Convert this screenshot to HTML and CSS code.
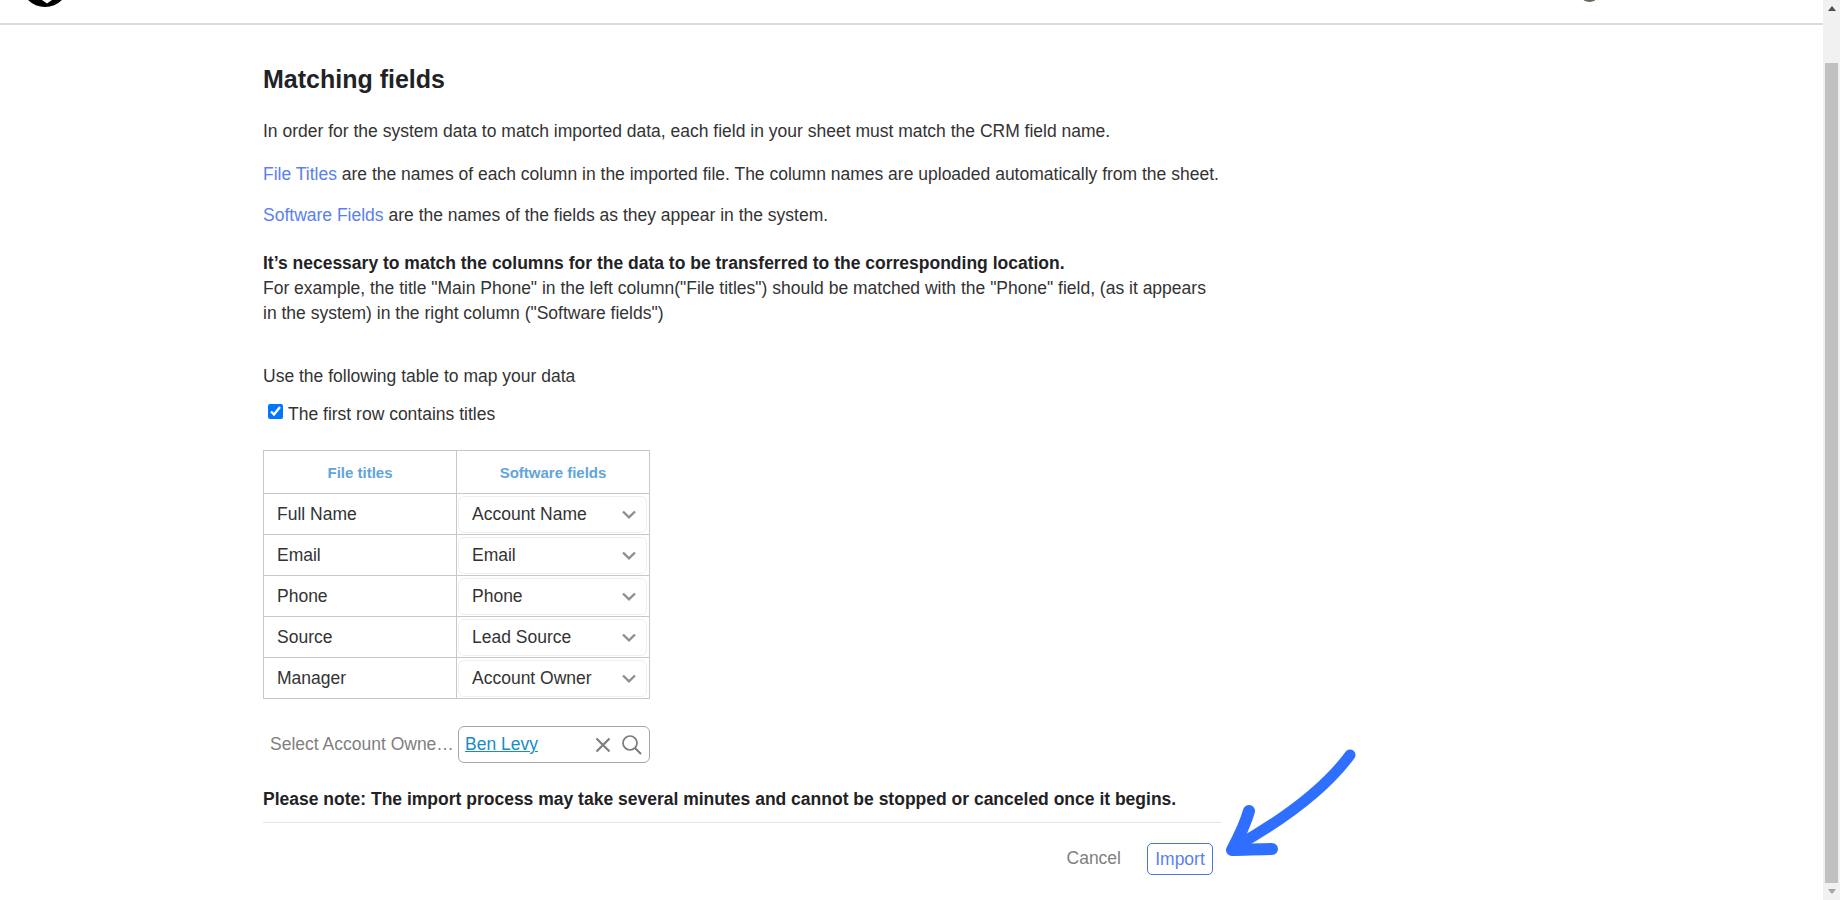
FILE: index.html
```html
<!DOCTYPE html>
<html lang="en">
<head>
<meta charset="utf-8">
<title>Matching fields</title>
<link rel="stylesheet" href="styles.css">
</head>
<body>
<div class="app">
  <div class="main">
    <header class="topbar">
      <svg class="logo" width="36" height="8" viewBox="0 0 36 8" aria-hidden="true"><circle cx="18" cy="-17" r="24" fill="#000"/><path d="M15 0h10l-5 3.500z" fill="#fff"/></svg>
      <svg class="avatar" width="15" height="2" viewBox="0 0 15 2" aria-hidden="true"><ellipse cx="7.500" cy="-3" rx="7.500" ry="5" fill="#6f6355"/></svg>
    </header>
    <main class="content">
      <h1 class="title">Matching fields</h1>
      <p class="para">In order for the system data to match imported data, each field in your sheet must match the CRM field name.</p>
      <p class="para para-titles"><span class="term">File Titles</span> are the names of each column in the imported file. The column names are uploaded automatically from the sheet.</p>
      <p class="para para-software"><span class="term">Software Fields</span> are the names of the fields as they appear in the system.</p>
      <p class="para para-example"><strong class="strong">It’s necessary to match the columns for the data to be transferred to the corresponding location.</strong><br>For example, the title "Main Phone" in the left column("File titles") should be matched with the "Phone" field, (as it appears in the system) in the right column ("Software fields")</p>
      <p class="para para-map">Use the following table to map your data</p>
      <label class="check-row"><input class="check" type="checkbox" checked>The first row contains titles</label>
      <table class="map">
        <thead><tr><th>File titles</th><th>Software fields</th></tr></thead>
        <tbody>
          <tr><td class="name">Full Name</td><td class="pick"><div class="select"><span>Account Name</span><svg width="14" height="9" viewBox="0 0 14 9"><path d="M1 1.500L7 7.300l6-5.800" fill="none" stroke="#8f8f8f" stroke-width="2.400"/></svg></div></td></tr>
          <tr><td class="name">Email</td><td class="pick"><div class="select"><span>Email</span><svg width="14" height="9" viewBox="0 0 14 9"><path d="M1 1.500L7 7.300l6-5.800" fill="none" stroke="#8f8f8f" stroke-width="2.400"/></svg></div></td></tr>
          <tr><td class="name">Phone</td><td class="pick"><div class="select"><span>Phone</span><svg width="14" height="9" viewBox="0 0 14 9"><path d="M1 1.500L7 7.300l6-5.800" fill="none" stroke="#8f8f8f" stroke-width="2.400"/></svg></div></td></tr>
          <tr><td class="name">Source</td><td class="pick"><div class="select"><span>Lead Source</span><svg width="14" height="9" viewBox="0 0 14 9"><path d="M1 1.500L7 7.300l6-5.800" fill="none" stroke="#8f8f8f" stroke-width="2.400"/></svg></div></td></tr>
          <tr><td class="name">Manager</td><td class="pick"><div class="select"><span>Account Owner</span><svg width="14" height="9" viewBox="0 0 14 9"><path d="M1 1.500L7 7.300l6-5.800" fill="none" stroke="#8f8f8f" stroke-width="2.400"/></svg></div></td></tr>
        </tbody>
      </table>
      <div class="owner-row">
        <span class="owner-label">Select Account Owne…</span>
        <div class="owner-input">
          <a class="owner-link" href="#">Ben Levy</a>
          <svg class="owner-clear" width="16" height="16" viewBox="0 0 16 16"><path d="M1.500 1.500l13 13M14.500 1.500l-13 13" stroke="#808080" stroke-width="2.300" fill="none"/></svg>
          <svg class="owner-search" width="20" height="20" viewBox="0 0 20 20"><circle cx="8" cy="8" r="7" fill="none" stroke="#7a7a7a" stroke-width="1.700"/><path d="M13 13l6 6" stroke="#7a7a7a" stroke-width="1.900" fill="none"/></svg>
        </div>
      </div>
      <p class="note">Please note: The import process may take several minutes and cannot be stopped or canceled once it begins.</p>
      <footer class="actions">
        <button class="btn-cancel" type="button">Cancel</button>
        <button class="btn-import" type="button">Import</button>
      </footer>
    </main>
    <svg class="arrow" width="140" height="120" viewBox="0 0 140 120" aria-hidden="true">
      <path d="M125 8C100 42 60 72 8 101" fill="none" stroke="#2f6fff" stroke-width="11" stroke-linecap="round"/>
      <path d="M24 64C20 78 14 90 7 103C20 103 32 102 47 102" fill="none" stroke="#2f6fff" stroke-width="12" stroke-linecap="round" stroke-linejoin="round"/>
    </svg>
  </div>
  <aside class="scrollbar" aria-hidden="true">
    <div class="sb-btn"><svg width="8" height="5" viewBox="0 0 8 5"><path d="M4 0l4 5H0z" fill="#505050"/></svg></div>
    <div class="sb-track"><div class="sb-thumb"></div></div>
    <div class="sb-btn"><svg width="8" height="5" viewBox="0 0 8 5"><path d="M0 0h8L4 5z" fill="#a3a3a3"/></svg></div>
  </aside>
</div>
</body>
</html>
```

FILE: styles.css
```css
* { box-sizing: border-box; }
html, body { margin: 0; height: 100%; overflow: hidden; background: #fff; }
body { font-family: "Liberation Sans", Arial, sans-serif; font-size: 17.5px; color: #333; }
.app { display: flex; height: 900px; }
.main { flex: 1; position: relative; min-width: 0; }

.topbar { height: 25px; border-bottom: 2px solid #dcdcdc; display: flex; justify-content: space-between; align-items: flex-start; padding: 0 226px 0 27px; }
.logo, .avatar { display: block; }

.content { width: 958px; margin-left: 263px; padding-top: 41px; }
.title { margin: 0; font-size: 25px; line-height: 27px; font-weight: 700; color: #1f2326; }
.para { margin: 0; line-height: 25px; }
.title + .para { margin-top: 26px; }
.para-titles { margin-top: 18px; }
.para-software { margin-top: 16px; }
.para-example { margin-top: 23px; }
.para-map { margin-top: 38px; }
.strong { color: #1f2326; }
.term { color: #5a80ee; }

.check-row { display: flex; align-items: center; height: 25px; margin-top: 13px; padding-left: 5px; }
.check { width: 15px; height: 15px; margin: 0 5px 7px 0; accent-color: #0075ff; }

.map { width: 387px; margin-top: 23px; border-collapse: collapse; table-layout: fixed; }
.map th, .map td { border: 1px solid #c8c8c8; padding: 0; }
.map th { height: 43px; font-size: 15px; font-weight: 700; color: #5fa5dd; text-align: center; }
.map td { height: 41px; }
.name { padding-left: 13px !important; }
.pick { padding: 1px 2px 1px 1px !important; }
.select { height: 37px; border: 1px solid #efefef; border-radius: 6px; display: flex; align-items: center; justify-content: space-between; padding: 1px 10px 0 13px; }

.owner-row { display: flex; align-items: center; margin-top: 27px; width: 387px; height: 37px; }
.owner-label { width: 195px; padding: 0 3px 0 7px; color: #808080; white-space: nowrap; overflow: hidden; }
.owner-input { flex: 1; height: 37px; border: 1px solid #a6a6a6; border-radius: 6px; display: flex; align-items: center; padding: 0 7px 0 6px; }
.owner-link { flex: 1; color: #1a8cc4; }
.owner-clear { margin-right: 11px; }

.note { margin: 24px 0 0; line-height: 25px; font-weight: 700; color: #1f2326; }
.actions { margin-top: 10px; border-top: 1px solid #e6e6e6; padding: 20px 8px 0 0; display: flex; justify-content: flex-end; align-items: center; gap: 26px; }
.btn-cancel { border: 0; background: none; padding: 0 0 2px; font: inherit; color: #808080; }
.btn-import { width: 66px; height: 32px; padding: 0; border: 1px solid #4a74e8; border-radius: 5px; background: #fff; font: inherit; color: #5a80ee; }

.arrow { position: absolute; left: 1225px; top: 747px; }

.scrollbar { width: 17px; flex: none; background: #f1f1f1; display: flex; flex-direction: column; }
.sb-btn { height: 17px; display: flex; align-items: center; justify-content: center; }
.sb-track { flex: 1; padding: 46px 2px 0; }
.sb-thumb { height: 820px; background: #c1c1c1; }
```
